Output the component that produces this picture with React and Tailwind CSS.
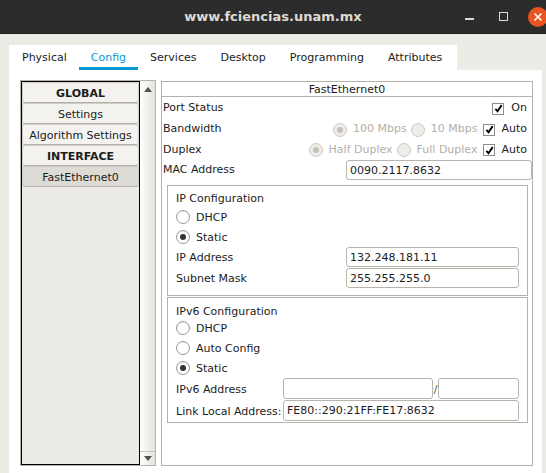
import React from 'react';

function Radio({ checked = false, disabled = false }) {
  return (
    <span
      className={
        disabled
          ? 'flex h-[14px] w-[14px] shrink-0 items-center justify-center rounded-full border border-[#cdc9c2] bg-[#efede9]'
          : 'flex h-[14px] w-[14px] shrink-0 items-center justify-center rounded-full border border-[#9c9891] bg-white shadow-[inset_0_1px_1px_rgba(0,0,0,0.08)]'
      }
    >
      {checked && (
        <span className={disabled ? 'h-[6px] w-[6px] rounded-full bg-[#c4c0b9]' : 'h-[6px] w-[6px] rounded-full bg-[#333333]'} />
      )}
    </span>
  );
}

function Check() {
  return (
    <span className="flex h-[12px] w-[12px] shrink-0 items-center justify-center border border-[#8f8c86] bg-white">
      <svg width="9" height="9" viewBox="0 0 9 9">
        <path d="M1.4 4.9 L3.5 7.3 L7.7 1.1" fill="none" stroke="#000" strokeWidth="1.9" />
      </svg>
    </span>
  );
}

function Field({ value = '', className = '' }) {
  return (
    <div className={'h-[20px] rounded-[3px] border border-[#b9b5ad] bg-white pl-[3px] leading-[19px] text-[#1c1c1c] ' + className}>
      {value}
    </div>
  );
}

function RadioRow({ label, checked }) {
  return (
    <div className="flex h-[20px] items-center gap-[6px]">
      <Radio checked={checked} />
      <span className="pt-[2px]">{label}</span>
    </div>
  );
}

function TitleBar() {
  return (
    <div className="relative flex h-[34px] shrink-0 items-center justify-center border-b border-[#1f1f1f] bg-[#2c2c2c] font-['DejaVu_Sans',sans-serif] text-[13px] font-bold text-[#dfdbd2]">
      www.fciencias.unam.mx
      <div className="absolute right-0 top-0 flex h-[33px] items-center">
        <span className="mt-[5px] h-[2px] w-[9px] bg-[#dfdbd2]" />
        <span className="ml-[25px] h-[9px] w-[9px] border-[1.5px] border-[#dfdbd2]" />
        <span className="ml-[20px] mr-[-2px] flex h-[20px] w-[20px] items-center justify-center rounded-full bg-[#e95420]">
          <svg width="10" height="10" viewBox="0 0 10 10">
            <path d="M1.5 1.5 L8.5 8.5 M8.5 1.5 L1.5 8.5" stroke="#fff" strokeWidth="1.6" />
          </svg>
        </span>
      </div>
    </div>
  );
}

const tabs = ['Physical', 'Config', 'Services', 'Desktop', 'Programming', 'Attributes'];

function Tabs() {
  return (
    <div className="flex h-[25px] w-[448px] bg-white pl-[1px]">
      {tabs.map(t =>
        t === 'Config' ? (
          <div key={t} className="flex flex-col px-[12px]">
            <span className="flex-1 pt-[5px] text-[#0a9bd2]">{t}</span>
            <span className="mx-[-12px] h-[4px] bg-[#069ad4]" />
          </div>
        ) : (
          <div key={t} className="px-[12px] pt-[5px] text-[#1c1c1c]">
            {t}
          </div>
        )
      )}
    </div>
  );
}

const items = [
  { label: 'GLOBAL', bold: true },
  { label: 'Settings' },
  { label: 'Algorithm Settings' },
  { label: 'INTERFACE', bold: true },
  { label: 'FastEthernet0', selected: true },
];

function Sidebar() {
  return (
    <div className="flex h-[386px] w-[136px] shrink-0 border border-[#b5b2ac]">
      <div className="flex flex-1 flex-col border border-black bg-[#edebe6]">
        {items.map(it => (
          <div
            key={it.label}
            className={
              'flex h-[21px] items-center justify-center rounded-[3px] border border-[#d0cdc7] border-b-[#b3b0aa] pt-[4px] ' +
              (it.selected ? 'bg-[#dddbd6] ' : 'bg-[#f3f2ef] ') +
              (it.bold ? 'font-bold' : '')
            }
          >
            {it.label}
          </div>
        ))}
      </div>
      <div className="flex w-[15px] flex-col justify-between bg-linear-to-r from-white to-[#e4e2dd]">
        <div className="flex h-[16px] items-center justify-center pt-[1px]">
          <svg width="8" height="5" viewBox="0 0 8 5">
            <path d="M0 5 L4 0 L8 5 Z" fill="#505050" />
          </svg>
        </div>
        <div className="flex h-[14px] items-center justify-center border-t border-[#c4c1bb]">
          <svg width="8" height="5" viewBox="0 0 8 5">
            <path d="M0 0 L8 0 L4 5 Z" fill="#505050" />
          </svg>
        </div>
      </div>
    </div>
  );
}

function Panel() {
  return (
    <div className="mt-[1px] flex h-[385px] w-[372px] shrink-0 flex-col border border-[#b5b2ac]">
      <div className="h-[15px] border-b border-[#b5b2ac] pt-[1px] text-center leading-[14px]">FastEthernet0</div>
      <div className="flex h-[21px] items-center pl-[1px] pr-[5px] pt-[2px]">
        <span className="flex-1">Port Status</span>
        <Check />
        <span className="ml-[7px]">On</span>
      </div>
      <div className="flex h-[21px] items-center pl-[1px] pr-[5px] pt-[2px]">
        <span className="flex-1">Bandwidth</span>
        <Radio checked disabled />
        <span className="ml-[6px] text-[#b3afa8]">100 Mbps</span>
        <span className="ml-[4px]"><Radio disabled /></span>
        <span className="ml-[6px] text-[#b3afa8]">10 Mbps</span>
        <span className="ml-[6px]"><Check /></span>
        <span className="ml-[6px]">Auto</span>
      </div>
      <div className="flex h-[20px] items-center pl-[1px] pr-[5px] pt-[2px]">
        <span className="flex-1">Duplex</span>
        <Radio checked disabled />
        <span className="ml-[6px] text-[#b3afa8]">Half Duplex</span>
        <span className="ml-[4px]"><Radio disabled /></span>
        <span className="ml-[6px] text-[#b3afa8]">Full Duplex</span>
        <span className="ml-[6px]"><Check /></span>
        <span className="ml-[6px]">Auto</span>
      </div>
      <div className="flex h-[21px] items-center pl-[1px]">
        <span className="flex-1 pt-[2px]">MAC Address</span>
        <Field value="0090.2117.8632" className="w-[186px]" />
      </div>

      <div className="ml-[5px] mr-[4px] mt-[5px] flex flex-col border border-[#b5b2ac] px-[8px] pb-[6px] pt-[4px]">
        <div className="flex h-[17px] items-center pt-[2px]">IP Configuration</div>
        <RadioRow label="DHCP" />
        <RadioRow label="Static" checked />
        <div className="flex h-[21px] items-start">
          <span className="w-[170px] pt-[1px] leading-[20px]">IP Address</span>
          <Field value="132.248.181.11" className="flex-1" />
        </div>
        <div className="flex h-[21px] items-start">
          <span className="w-[170px] pt-[1px] leading-[20px]">Subnet Mask</span>
          <Field value="255.255.255.0" className="flex-1" />
        </div>
      </div>

      <div className="ml-[5px] mr-[4px] mt-[1px] flex flex-col border border-[#b5b2ac] px-[8px] pb-[1px] pt-[4px]">
        <div className="flex h-[16px] items-center pt-[4px]">IPv6 Configuration</div>
        <RadioRow label="DHCP" />
        <RadioRow label="Auto Config" />
        <RadioRow label="Static" checked />
        <div className="flex h-[22px] items-start">
          <span className="w-[107px] pt-[1px] leading-[21px]">IPv6 Address</span>
          <Field className="h-[21px] w-[150px]" />
          <span className="w-[5px] text-center leading-[24px] text-[#555]">/</span>
          <Field className="h-[21px] flex-1" />
        </div>
        <div className="flex h-[21px] items-start">
          <span className="w-[107px] pt-[1px] leading-[21px]">Link Local Address:</span>
          <Field value="FE80::290:21FF:FE17:8632" className="h-[21px] flex-1 leading-[20px]" />
        </div>
      </div>
    </div>
  );
}

export default function App() {
  return (
    <div className="flex h-[473px] w-[546px] flex-col overflow-hidden bg-[#edebe6] font-['DejaVu_Sans',sans-serif] text-[11px] text-[#1c1c1c]">
      <TitleBar />
      <div className="flex flex-1 flex-col pl-[9px] pt-[11px]">
        <Tabs />
        <div className="flex w-[533px] flex-1 gap-[5px] bg-white pl-[11px] pt-[10px]">
          <Sidebar />
          <Panel />
        </div>
      </div>
    </div>
  );
}
